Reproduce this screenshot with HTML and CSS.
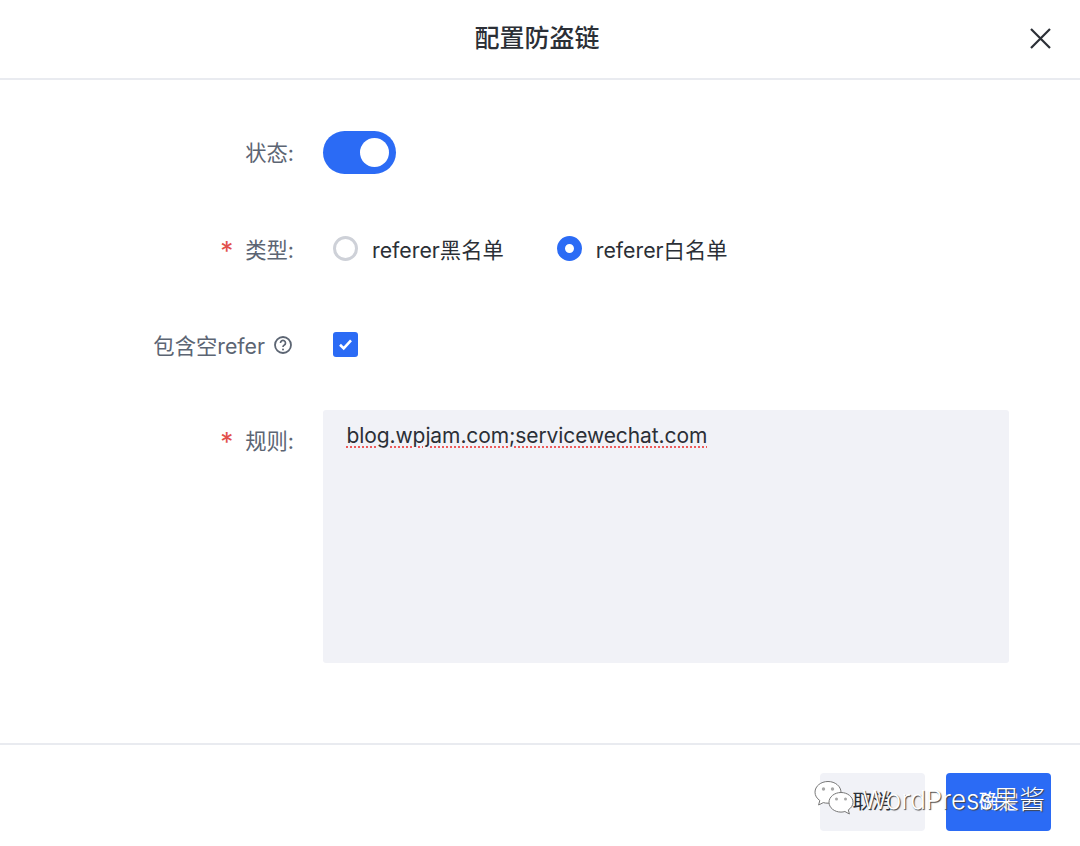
FILE: index.html
```html
<!doctype html>
<html>
  <head>
    <meta charset="utf-8">
    <title>配置防盗链</title>
    <link rel="stylesheet" href="styles.css">
  </head>
  <body>
    <div class="dialog">
      <div class="dialog-header">
        <h1 class="dialog-title">配置防盗链</h1>
        <svg class="close-icon" width="24" height="24" viewBox="0 0 24 24">
          <path d="M3 3L22 22M22 3L3 22" stroke="#2b2f36" stroke-width="2.2" fill="none"/>
        </svg>
      </div>

      <div class="dialog-body">
        <div class="row row-switch">
          <div class="label label-switch">状态:</div>
          <div class="control"><div class="switch"><span class="switch-knob"></span></div></div>
        </div>

        <div class="row row-radio">
          <div class="label"><span class="star">*</span>类型:</div>
          <div class="control radios">
            <div class="radio"><span class="radio-dot"></span>referer黑名单</div>
            <div class="radio"><span class="radio-dot checked"></span>referer白名单</div>
          </div>
        </div>

        <div class="row row-check">
          <div class="label">包含空refer
            <svg class="help-icon" width="20" height="20" viewBox="0 0 20 20">
              <circle cx="10" cy="10" r="8" stroke="#5c6573" stroke-width="1.800" fill="none"/>
              <path d="M7.500 8a2.500 2.500 0 1 1 3.800 2.100c-.9.500-1.300 1-1.300 1.900" stroke="#5c6573" stroke-width="1.700" fill="none"/>
              <circle cx="10" cy="14.400" r="1" fill="#5c6573"/>
            </svg>
          </div>
          <div class="control">
            <div class="checkbox">
              <svg width="15" height="13" viewBox="0 0 15 13">
                <path d="M2 6.800L5.700 10.400L13 2.400" stroke="#fff" stroke-width="2.600" fill="none"/>
              </svg>
            </div>
          </div>
        </div>

        <div class="row row-rules">
          <div class="label"><span class="star">*</span>规则:</div>
          <div class="control"><div class="rules-input"><span class="spell">blog.wpjam.com;servicewechat.com</span></div></div>
        </div>
      </div>

      <div class="dialog-footer">
        <div class="btn btn-cancel">取消</div>
        <div class="btn btn-ok">确定</div>
      </div>
    </div>

    <!-- watermark lies over the footer buttons -->
    <div class="watermark">
      <svg class="watermark-icon" width="40" height="36" viewBox="0 0 40 36">
        <path d="M14 1.500C6.800 1.500 1 6.200 1 12.200c0 3.400 1.900 6.300 4.800 8.300L4.600 25l4.700-2.400c1.500.4 3 .6 4.700.6 7.200 0 13-4.900 13-10.900S21.200 1.500 14 1.500z" fill="#fff" stroke="#777" stroke-width="1"/>
        <circle cx="9.500" cy="9" r="1.700" fill="#a8a8a8"/>
        <circle cx="18.500" cy="9" r="1.700" fill="#a8a8a8"/>
        <path d="M27 12.500c-6.600 0-12 4.400-12 9.800s5.400 9.800 12 9.800c1.400 0 2.700-.2 3.900-.6l4.500 2.500-1.100-4.100c2.800-1.800 4.700-4.500 4.700-7.600 0-5.400-5.400-9.800-12-9.800z" fill="#fff" stroke="#777" stroke-width="1"/>
        <circle cx="22.500" cy="19" r="1.500" fill="#a8a8a8"/>
        <circle cx="31.500" cy="19" r="1.500" fill="#a8a8a8"/>
      </svg>
      <span class="watermark-text">WordPress果酱</span>
    </div>
  </body>
</html>
```

FILE: styles.css
```css
* {
  box-sizing: border-box;
}

body {
  margin: 0;
  background: #fff;
  font-family: "Inter", "Noto Sans CJK SC", sans-serif;
  font-size: 21.300px;
  color: #2b2f36;
}

.dialog {
  width: 1080px;
  height: 846px;
  display: flex;
  flex-direction: column;
}

.dialog-header {
  height: 80px;
  flex: none;
  display: flex;
  align-items: center;
  justify-content: center;
  padding-bottom: 6px;
  border-bottom: 2px solid #e9ebf0;
  position: relative;
}

.dialog-title {
  margin: 0 6px 0 0;
  font-size: 25px;
  font-weight: 500;
  color: #2b2f36;
}

.close-icon {
  position: absolute;
  right: 28px;
  top: 26px;
}

.dialog-body {
  height: 663px;
  flex: none;
  padding-top: 51px;
}

.row {
  display: grid;
  grid-template-columns: 294px 1fr;
  column-gap: 29px;
}

.label {
  display: flex;
  justify-content: flex-end;
  align-items: center;
  color: #5c6573;
  white-space: nowrap;
}

.label-switch {
  padding-bottom: 3px;
}

.star {
  color: #e2504c;
  margin-right: 12px;
  font-size: 26px;
  line-height: 24px;
  padding-top: 5px;
}

.row-switch {
  height: 43px;
}

.switch {
  width: 73px;
  height: 43px;
  border-radius: 22px;
  background: #2b6bf5;
  display: flex;
  align-items: center;
  justify-content: flex-end;
  padding-right: 7px;
}

.switch-knob {
  width: 29px;
  height: 29px;
  border-radius: 50%;
  background: #fff;
}

.row-radio {
  height: 26px;
  margin-top: 59px;
  align-items: center;
}

.radios {
  display: flex;
  padding-left: 10px;
  gap: 53px;
}

.radio {
  display: flex;
  align-items: center;
  gap: 14px;
  color: #2b2f36;
}

.radio-dot {
  width: 25px;
  height: 25px;
  border-radius: 50%;
  border: 3px solid #ced1d8;
}

.radio-dot.checked {
  border: 8.500px solid #2b6bf5;
  background: #fff;
}

.row-check {
  height: 26px;
  margin-top: 70px;
  align-items: center;
}

.row-check .control {
  padding-left: 10px;
}

.help-icon {
  margin-left: 8px;
  margin-right: 1px;
}

.checkbox {
  width: 25px;
  height: 25px;
  border-radius: 3px;
  background: #2b6bf5;
  display: flex;
  align-items: center;
  justify-content: center;
}

.row-rules {
  margin-top: 55px;
}

.row-rules .label {
  height: 58px;
  align-items: center;
}

.rules-input {
  width: 686px;
  height: 253px;
  background: #f1f2f7;
  border-radius: 3px;
  padding: 10px 23.500px;
  font-size: 21px;
  line-height: 32px;
  letter-spacing: -0.090px;
  color: #2b2f36;
}

.spell {
  text-decoration: underline dotted #ee5a5a 2px;
  text-underline-offset: 3px;
}

.dialog-footer {
  flex: 1;
  border-top: 2px solid #e9ebf0;
  display: flex;
  justify-content: flex-end;
  align-items: flex-start;
  gap: 21px;
  padding: 28px 29px 0 0;
}

.btn {
  width: 105px;
  height: 58px;
  border-radius: 4px;
  display: flex;
  align-items: center;
  justify-content: center;
  padding-bottom: 4px;
  font-size: 20px;
}

.btn-cancel {
  background: #f1f2f7;
  color: #2b2f36;
}

.btn-ok {
  background: #2b6bf5;
  color: #fff;
}

.watermark {
  position: absolute;
  left: 814px;
  top: 779px;
  display: flex;
  align-items: center;
  gap: 8px;
}

.watermark-text {
  font-family: "Inter", "Noto Sans CJK SC", sans-serif;
  font-size: 26px;
  font-weight: 300;
  color: #fff;
  text-shadow: 1px 1px 1px #444;
  white-space: nowrap;
}
```
